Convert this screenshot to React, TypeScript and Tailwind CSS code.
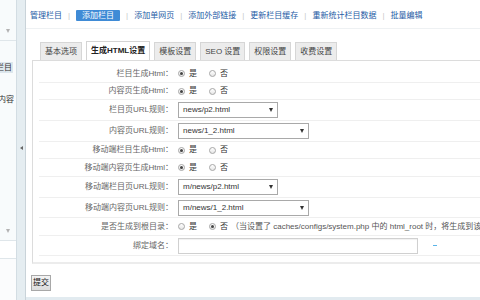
import type { ReactNode } from 'react';

type Row = {
  label: string;
  h: string;
  kind: 'radio' | 'select' | 'input';
  yes?: boolean;
  value?: string;
  w?: string;
  note?: boolean;
};

const rows: Row[] = [
  { label: '栏目生成Html：', h: 'h-[18px]', kind: 'radio', yes: true },
  { label: '内容页生成Html：', h: 'h-[17px]', kind: 'radio', yes: true },
  { label: '栏目页URL规则：', h: 'h-[21px]', kind: 'select', value: 'news/p2.html', w: 'w-[100px]' },
  { label: '内容页URL规则：', h: 'h-[21px]', kind: 'select', value: 'news/1_2.html', w: 'w-[131px]' },
  { label: '移动端栏目生成Html：', h: 'h-[17px]', kind: 'radio', yes: true },
  { label: '移动端内容页生成Html：', h: 'h-[18px]', kind: 'radio', yes: true },
  { label: '移动端栏目页URL规则：', h: 'h-[21px]', kind: 'select', value: 'm/news/p2.html', w: 'w-[100px]' },
  { label: '移动端内容页URL规则：', h: 'h-[20px]', kind: 'select', value: 'm/news/1_2.html', w: 'w-[131px]' },
  { label: '是否生成到根目录：', h: 'h-[18px]', kind: 'radio', yes: false, note: true },
  { label: '绑定域名：', h: 'h-[20px]', kind: 'input' },
];

const navItems = ['管理栏目', '添加栏目', '添加单网页', '添加外部链接', '更新栏目缓存', '重新统计栏目数据', '批量编辑'];
const tabs = ['基本选项', '生成HTML设置', '模板设置', 'SEO 设置', '权限设置', '收费设置'];

function Radio({ checked, children }: { checked: boolean; children: ReactNode }) {
  return (
    <span className="flex items-center gap-[4px] text-[#333]">
      <span className="w-[7px] h-[7px] rounded-full border border-[#a6a6a6] bg-gradient-to-b from-white to-[#e6e6e6] flex items-center justify-center">
        {checked && <span className="w-[3px] h-[3px] rounded-full bg-[#444]" />}
      </span>
      {children}
    </span>
  );
}

function DownArrow({ color }: { color: string }) {
  return (
    <span
      className="w-0 h-0 border-l-[2.5px] border-r-[2.5px] border-t-[4px] border-l-transparent border-r-transparent"
      style={{ borderTopColor: color }}
    />
  );
}

function Field({ row }: { row: Row }) {
  if (row.kind === 'radio') {
    return (
      <div className="flex items-center whitespace-nowrap">
        <Radio checked={!!row.yes}>是</Radio>
        <span className="ml-[12px]">
          <Radio checked={!row.yes}>否</Radio>
        </span>
        {row.note && (
          <span className="ml-[3px] text-[#555]">
            （当设置了 caches/configs/system.php 中的 html_root 时，将生成到该目录下
          </span>
        )}
      </div>
    );
  }
  if (row.kind === 'select') {
    return (
      <div
        className={`${row.w} h-[16px] border border-[#a9a9a9] bg-white flex items-center justify-between pl-[4px] pr-[4px] text-[#333]`}
      >
        <span>{row.value}</span>
        <DownArrow color="#333" />
      </div>
    );
  }
  return (
    <div className="flex items-center">
      <div className="w-[240px] h-[16px] border border-[#d0d0d0] bg-white shadow-[inset_0_1px_1px_rgba(0,0,0,0.06)]" />
      <span className="ml-[15px] w-[4px] h-[1px] bg-[#5ab4e8]" />
    </div>
  );
}

export default function App() {
  return (
    <div className="w-[480px] h-[300px] overflow-hidden flex bg-white text-[8px] leading-none font-['Liberation_Sans','Noto_Sans_CJK_SC',sans-serif]">
      {/* left tree, mostly scrolled out of view */}
      <aside className="w-[17px] shrink-0 flex flex-col bg-[#f8fbfc] border-r border-[#d3dde3] overflow-hidden text-[#333]">
        <div className="h-[41px] shrink-0 flex items-end justify-center pb-[7px] border-b border-[#dfe6ea]">
          <DownArrow color="#b3b3b3" />
        </div>
        <div className="mt-[21px] h-[11px] w-[13px] bg-[#dde7ed] flex items-center justify-end overflow-hidden">
          <span className="whitespace-nowrap pr-[1px]">栏目</span>
        </div>
        <div className="mt-[21px] h-[11px] w-[14px] flex items-center justify-end overflow-hidden">
          <span className="whitespace-nowrap">内容</span>
        </div>
        <div className="mt-[124px] flex justify-center">
          <DownArrow color="#b3b3b3" />
        </div>
        <div className="mt-[7px] h-[19px] shrink-0 border-t border-b border-[#dfe6ea] bg-white" />
        <div className="flex-1 bg-[#fbfcfd]" />
      </aside>

      {/* collapse strip */}
      <div className="w-[9px] shrink-0 bg-[#e5edf1] border-r border-[#c9d3d9] flex items-center justify-center">
        <span className="w-0 h-0 border-t-[2.5px] border-b-[2.5px] border-r-[3px] border-t-transparent border-b-transparent border-r-[#666] -mt-[4px]" />
      </div>

      <main className="flex-1 min-w-0 flex flex-col overflow-hidden">
        <nav className="h-[29px] shrink-0 pt-[3px] pl-[4px] flex items-center whitespace-nowrap border-b border-[#eef1f3] text-[#245ba5]">
          {navItems.map((item, i) => (
            <span key={item} className="flex items-center">
              {i > 0 && <span className="px-[6px] text-[#c8c8c8]">|</span>}
              {i === 1 ? (
                <span className="px-[6px] h-[11px] flex items-center bg-[#3f8bd6] text-white rounded-[1px]">{item}</span>
              ) : (
                <span>{item}</span>
              )}
            </span>
          ))}
        </nav>

        <div className="pl-[6px] pt-[12px] flex flex-col">
          <div className="flex gap-[4px] pl-[8px] whitespace-nowrap">
            {tabs.map((tab, i) =>
              i === 1 ? (
                <span
                  key={tab}
                  className="h-[19px] px-[4px] flex items-center bg-white border border-b-0 border-[#d4d4d4] font-bold text-[#222] -mb-px relative"
                >
                  {tab}
                </span>
              ) : (
                <span
                  key={tab}
                  className="h-[18px] mt-[1px] px-[4px] flex items-center bg-[#ececec] border border-b-0 border-[#d6d6d6] text-[#444]"
                >
                  {tab}
                </span>
              ),
            )}
          </div>

          <div className="w-[600px] border border-[#dcdcdc] border-b-2 border-b-[#ececec] pt-[4px] pb-[6px] pl-[6px]">
            {rows.map((row) => (
              <div key={row.label} className={`${row.h} box-border flex items-center border-b border-[#efefef]`}>
                <span className="w-[134px] shrink-0 text-right text-[#666] whitespace-nowrap">{row.label}</span>
                <span className="ml-[5px]">
                  <Field row={row} />
                </span>
              </div>
            ))}
          </div>

          <div className="mt-[11px] -ml-[1px]">
            <button className="w-[20px] h-[16px] flex items-center justify-center border border-[#a8a8a8] bg-gradient-to-b from-[#f4f4f4] to-[#dcdcdc] text-[#111] text-[8px] font-['Liberation_Sans','Noto_Sans_CJK_SC',sans-serif]">
              提交
            </button>
          </div>
        </div>

        <div className="mt-auto h-[3px] shrink-0 bg-[#e2ebf0]" />
      </main>
    </div>
  );
}
